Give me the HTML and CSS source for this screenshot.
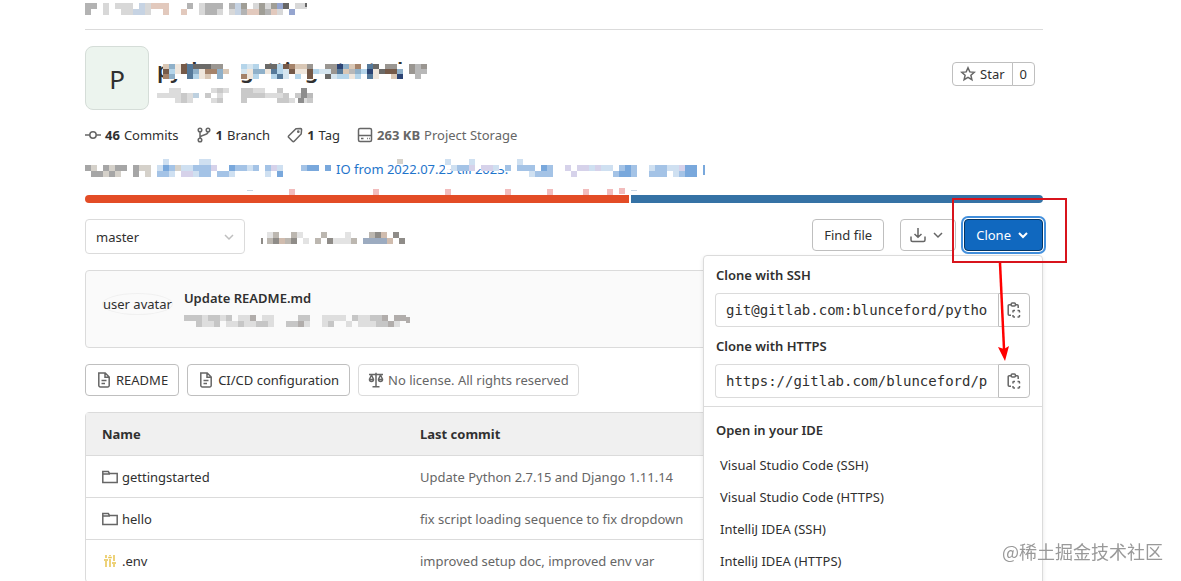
FILE: index.html
```html
<!DOCTYPE html>
<html lang="en">
<head>
    <meta charset="UTF-8">
    <meta name="viewport" content="width=device-width, initial-scale=1.0">
    <title>python-getting-started</title>
    <link rel="stylesheet" href="styles.css">
</head>
<body>
    <!-- Breadcrumb -->
    <header class="breadcrumb">
        <svg class="mosaic" width="222" height="12" viewBox="0 0 37 2" aria-hidden="true">
            <path stroke="#b3b3b3" d="M0 .5h2M17 .5h1M20 .5h3M24 .5h1M0 1.5h1M20 1.5h2M26 1.5h1M29 1.5h2"/>
            <path stroke="#d8d8d8" d="M3 .5h1M5 .5h3M10 .5h1M3 1.5h1M6 1.5h4M10 1.5h1M19 .5h1M19 1.5h1M22 1.5h1M24 1.5h2M28 .5h1M30 .5h1M32 1.5h1M35 .5h2"/>
            <path stroke="#c6d3e3" d="M9 .5h1M8 1.5h2M25 .5h1M25 1.5h1"/>
            <path stroke="#e2c9bd" d="M11 .5h3M13 1.5h1M16 1.5h1M27 1.5h2M31 1.5h1"/>
            <path stroke="#a09e96" d="M26 .5h1M29 .5h1M31 .5h1M29 1.5h1"/>
            <path stroke="#666" d="M33 .5h1M36.600 0.200h.4"/>
            <path stroke="#95a5cf" d="M32 .5h1M34 1.5h1"/>
        </svg>
    </header>

    <!-- Project title -->
    <section class="project">
        <div class="avatar">P</div>
        <div class="project-info">
            <h1>python-getting-started</h1>
            <svg class="mosaic title-mosaic" width="270" height="15" viewBox="0 0 45 3" preserveAspectRatio="none" aria-hidden="true">
                <rect x="1" width="40" height="3" fill="#fff"/>
                <path stroke="#d9c7b5" d="M1 .5h1M11 1.5h1M8 2.500h1M23 .5h2M32 .5h1M31 1.5h1M39 2.500h1"/>
                <path stroke="#8fb0c9" d="M2 .5h1M6 1.5h1M10 1.5h1M2 2.500h1M10 2.500h1M17 1.500h1M16 1.5h1M31 .5h1M33 1.5h1M40 1.5h1"/>
                <path stroke="#efe6dc" d="M3 .5h1M3 1.5h1M7 1.5h1M7 2.500h1M15 1.5h1M15 2.500h1M18 1.5h1M23 1.5h2M36 1.5h1M32 2.500h1M36 2.500h1"/>
                <path stroke="#755a49" d="M4 .5h1M1 1.5h1M4 1.5h1M21 .5h1M22 1.5h1M25 1.500h1M38 1.500h2M25 2.500h1"/>
                <path stroke="#a5836a" d="M8 1.5h2M22 .5h1M33 .5h1M1 2.500h1M14 2.500h1"/>
                <path stroke="#55799a" d="M5 .5h1M5 1.5h1M5 2.500h1M19 1.5h1M20 2.500h1M35 .5h1M30 1.500h1M35 2.500h1"/>
                <path stroke="#6b6a68" d="M6 .5h3M18 .5h2M28 2.500h1M36 .5h1M37 1.5h1"/>
                <path stroke="#9a9691" d="M9 .5h2M25 .5h1M28 .5h2M29 1.500h1M38 .5h2M42 .5h1M44 .5h1M42 1.5h1"/>
                <path stroke="#b5d5ea" d="M2 1.5h1M14 .5h1M16 .5h1M6 2.500h1M16 2.500h1M20 .5h1M20 1.5h1M19 2.500h1M26 1.500h1M23 2.500h1M30 2.500h2M33 2.500h1M34 1.500h1"/>
                <path stroke="#d5e5ef" d="M15 .5h1M14 1.5h1M21 1.5h1M21 2.500h1M27 1.5h1M29 2.500h1M28 1.5h1"/>
                <path stroke="#2c4474" d="M30 .5h1M35 1.5h1M40 2.500h1"/>
                <path stroke="#b8b8b8" d="M43 .5h1M43 1.500h2M43 2.500h1M32 1.500h1"/>
            </svg>
            <svg class="mosaic" width="270" height="15" viewBox="0 0 45 3" preserveAspectRatio="none" aria-hidden="true">
                <path stroke="#dcdcdc" d="M2 .5h2M9 .5h1M11 .5h1M16 .5h2M0 1.5h4M5 1.500h1M10 1.500h1M18 1.5h3M3 2.500h1M5 2.500h1M9 2.500h1M22 2.500h1M24 2.500h1"/>
                <path stroke="#c9c9c9" d="M10 .5h1M14 .5h2M20 .5h1M4 1.5h1M8 1.5h1M14 1.5h4M21 1.5h1M4 2.500h1M10 2.500h1M14 2.500h1M20 2.500h2M23 1.500h1M25 2.500h1"/>
                <path stroke="#bdd0df" d="M6 1.5h1"/>
                <path stroke="#8d8d8d" d="M24 .5h1M24 1.5h1M23.500 2.500h1"/>
                <path stroke="#bbb" d="M25 1.5h1"/>
            </svg>
        </div>
        <div class="star-group">
            <button type="button" class="btn btn-small">
                <svg class="icon" viewBox="0 0 16 16" aria-hidden="true"><path d="M8 1.8l1.8 4.1 4.5.4-3.4 3 1 4.4L8 11.4l-3.9 2.3 1-4.4-3.4-3 4.5-.4z"/></svg>
                Star
            </button>
            <a href="#" class="btn btn-small">0</a>
        </div>
    </section>

    <nav class="stats">
        <a href="#">
            <svg class="icon" viewBox="0 0 16 16" aria-hidden="true"><circle cx="8" cy="8" r="3.2"/><path d="M0 8h4.8M11.2 8H16"/></svg>
            <strong>46</strong> Commits
        </a>
        <a href="#">
            <svg class="icon" viewBox="0 0 16 16" aria-hidden="true"><circle cx="4" cy="3" r="1.8"/><circle cx="4" cy="13" r="1.8"/><circle cx="12" cy="3" r="1.8"/><path d="M4 5v6M12 5c0 4-8 2-8 6"/></svg>
            <strong>1</strong> Branch
        </a>
        <a href="#">
            <svg class="icon" viewBox="0 0 16 16" aria-hidden="true"><path d="M9 1.8l4.6-.4c.6 0 1 .4 1 1L14.2 7l-7 7.2c-.5.5-1.2.5-1.7 0L1.8 10.5c-.5-.5-.5-1.2 0-1.7z"/><circle cx="11.3" cy="4.7" r=".6"/></svg>
            <strong>1</strong> Tag
        </a>
        <span class="storage">
            <svg class="icon" viewBox="0 0 16 16" aria-hidden="true"><rect x="1.5" y="1.5" width="13" height="13" rx="1.5"/><path d="M1.5 8.5h13M4 11.5h2.5M10 11.5h.8M12 11.5h.8"/></svg>
            <strong>263 KB</strong> Project Storage
        </span>
    </nav>

    <div class="description">
        <a href="#">IO from 2022.07.25 till 2023.</a>
        <svg class="mosaic" width="624" height="36" viewBox="0 0 104 6" aria-hidden="true">
            <path stroke="#fff" d="M54 .5h20M60 1.100h14M71 1.500h3"/>
            <path stroke="#a6a6a6" d="M0 1.5h1M1 2.5h2M3 1.5h1M5 1.5h2M4 2.5h1M8 1.5h1M8 2.5h1"/>
            <path stroke="#d5d1ca" d="M1 1.5h1M4 1.5h1M3 2.5h1M5 2.500h1M9 1.5h2M10 2.5h1M15 1.500h1M52 .3h1"/>
            <path stroke="#cfe0f1" d="M12 1.5h1M13 .5h1M14 2.5h1M19 .5h2M16 1.5h2M18 2.5h1M24 2.5h1M26 1.5h2M30 2.5h1M32 1.5h1M60 .5h1M64 .5h1M72 .5h1M61 1.500h1M68 1.500h1M74 2.500h1M84 1.500h1M87 1.500h1M94 1.500h1M86 1.500h1M97 1.500h2M98 2.500h1"/>
            <path stroke="#a4c3e6" d="M14 1.500h1M18 1.5h3M12 2.500h2M19 2.5h2M23 2.5h1M25 1.5h2M22 2.500h1M28 1.500h1M30 1.5h1M36 1.5h1M62 1.5h2M70 1.5h1M72 1.5h3M75 2.5h3M77 1.500h1M89 1.5h3M88 2.5h1M91 2.500h1M94 2.500h3M95 1.5h2M99 2.500h1"/>
            <path stroke="#79a8dc" d="M13 1.5h1M24 1.5h1M32 2.5h1M37 1.5h2M40 1.5h1M76 1.5h1M89 2.500h2M90 1.5h1M100 1.500h2M100 2.5h2M103 1.5h.4M103 2.2h.4"/>
            <path stroke="#d6d2ea" d="M16 2.5h2M21 1.5h1M31 1.5h1M64 1.500h1M66 1.5h2M80 1.500h1M82 1.5h2M81 2.5h1M85 1.5h1M99 1.500h1"/>
            <path stroke="#f2bcbc" d="M34 5.5h1M48 5.5h1M60 5.5h1M70 5.5h1M77 5.5h1M83 5.5h1M87 5.5h1M89 5.300h1"/>
            <path stroke="#c9d6e4" stroke-width=".2" d="M27 5.300h1M91 5.300h1"/>
        </svg>
    </div>

    <!-- Language bar -->
    <div class="languages">
        <span class="lang-html" style="flex-grow: 568"></span>
        <span class="lang-python" style="flex-grow: 430"></span>
    </div>

    <section class="tree-controls">
        <label class="hidden-label" for="branch">Branch</label>
        <div class="branch-select">
            <select id="branch"><option>master</option></select>
            <svg class="icon" viewBox="0 0 16 16" aria-hidden="true"><path d="M4 6l4 4 4-4"/></svg>
        </div>
        <svg class="mosaic path-mosaic" width="144" height="12" viewBox="0 0 24 2" aria-hidden="true">
            <path stroke="#bcb7b0" d="M2 .5h1M5 .5h1M10 .5h1M18 .5h1M20 .5h1M1 1.5h2M4 1.5h1M9 1.5h1M15 1.5h1M21 1.5h1"/>
            <path stroke="#8f8c88" d="M0 1.500h.3M5 1.5h1M11 1.5h1M23 1.5h1M19 .5h1M22 .5h1M2 1.5h1"/>
            <path stroke="#e3e3e3" d="M1 .5h1M3 1.500h1M6 .5h1M7 1.5h1M13 1.5h1M14 .5h1M14 1.500h1M12 1.5h1"/>
            <path stroke="#d0bcae" d="M20 .5h1M21 1.5h1M3 1.500h1"/>
            <path stroke="#9cabc0" d="M17 1.5h3M20 1.5h1"/>
        </svg>
        <div class="tree-actions">
            <a href="#" class="btn">Find file</a>
            <button type="button" class="btn btn-download" aria-label="Download">
                <svg class="icon" viewBox="0 0 16 16" aria-hidden="true"><path d="M8 1v9M4.5 7L8 10.3 11.5 7M1 9.5V13a1.5 1.5 0 0 0 1.5 1.5h11A1.5 1.5 0 0 0 15 13V9.5"/></svg>
                <svg class="icon" viewBox="0 0 16 16" aria-hidden="true"><path d="M4 6l4 4 4-4"/></svg>
            </button>
            <button type="button" class="btn btn-clone">
                Clone
                <svg class="icon" viewBox="0 0 16 16" aria-hidden="true"><path d="M4 6l4 4 4-4"/></svg>
            </button>
        </div>

        <!-- Clone dropdown -->
        <div class="clone-menu">
            <div class="clone-urls">
                <label for="ssh">Clone with SSH</label>
                <div class="url-group">
                    <input type="text" id="ssh" value="git@gitlab.com:blunceford/pytho" readonly>
                    <button type="button" class="btn btn-copy" aria-label="Copy SSH URL">
                        <svg class="icon" viewBox="0 0 16 16" aria-hidden="true"><path d="M5 13.2H3.2a1 1 0 0 1-1-1V3.8a1 1 0 0 1 1-1H5M9.500 2.800h1.700a1 1 0 0 1 1 1V6"/><rect x="5.200" y="1" width="4.200" height="3" rx="1"/><path d="M7 10.500V9.200a.7.7 0 0 1 .7-.7H9M11.500 8.500h1.300a.7.7 0 0 1 .7.7v1.300M13.500 13v1.300a.7.7 0 0 1-.7.7h-1.300M9 15H7.700a.7.7 0 0 1-.7-.7V13"/></svg>
                    </button>
                </div>
                <label for="https">Clone with HTTPS</label>
                <div class="url-group">
                    <input type="text" id="https" value="https://gitlab.com/blunceford/p" readonly>
                    <button type="button" class="btn btn-copy" aria-label="Copy HTTPS URL">
                        <svg class="icon" viewBox="0 0 16 16" aria-hidden="true"><path d="M5 13.2H3.2a1 1 0 0 1-1-1V3.8a1 1 0 0 1 1-1H5M9.500 2.800h1.700a1 1 0 0 1 1 1V6"/><rect x="5.200" y="1" width="4.200" height="3" rx="1"/><path d="M7 10.500V9.200a.7.7 0 0 1 .7-.7H9M11.500 8.500h1.300a.7.7 0 0 1 .7.7v1.300M13.500 13v1.300a.7.7 0 0 1-.7.7h-1.300M9 15H7.700a.7.7 0 0 1-.7-.7V13"/></svg>
                    </button>
                </div>
            </div>
            <h2>Open in your IDE</h2>
            <ul>
                <li><a href="#">Visual Studio Code (SSH)</a></li>
                <li><a href="#">Visual Studio Code (HTTPS)</a></li>
                <li><a href="#">IntelliJ IDEA (SSH)</a></li>
                <li><a href="#">IntelliJ IDEA (HTTPS)</a></li>
            </ul>
        </div>

        <!-- Highlight around the clone button -->
        <div class="highlight"></div>
        <svg class="arrow" width="12" height="98" viewBox="0 0 12 98" aria-hidden="true">
            <path d="M3 0L7 86" stroke="#f00" stroke-width="2.5"/>
            <path d="M1 84l6 2 5-3-4 15z" fill="#f00"/>
        </svg>
    </section>

    <!-- Last commit -->
    <section class="last-commit">
        <span class="user-avatar">user avatar</span>
        <div>
            <a href="#">Update README.md</a>
            <svg class="mosaic" width="228" height="12" viewBox="0 0 38 2" aria-hidden="true">
                <path stroke="#c6c6c6" d="M0 .5h3M4 .5h2M7 .5h1M19 .5h2M28 .5h1M31 .5h2M2 1.5h1M5 1.5h1M9 1.5h1M12 1.5h2M17 1.5h3M24 1.5h1M32 1.5h2"/>
                <path stroke="#dedede" d="M3 .500h1M6 .5h1M9 .5h2M13 .5h2M23 .5h4M29 .5h2M3 1.5h2M7 1.5h2M10 1.5h2M14 1.5h1M20 1.5h1M23 1.5h1M27 1.5h1M29 1.5h3M35 1.5h1"/>
                <path stroke="#b1adab" d="M11 .5h1M33 .5h1M35 .5h2M19 1.5h1M34 1.5h1M37 .8h.6"/>
            </svg>
        </div>
    </section>

    <div class="file-buttons">
        <a href="#" class="btn">
            <svg class="icon" viewBox="0 0 16 16" aria-hidden="true"><path d="M2.8 1h6.4l4 4v8.5A1.5 1.5 0 0 1 11.7 15H4.3a1.5 1.5 0 0 1-1.5-1.5zM9 1v4.2h4.2M5.5 8.5h5M5.5 11.5h3.5"/></svg>
            README
        </a>
        <a href="#" class="btn">
            <svg class="icon" viewBox="0 0 16 16" aria-hidden="true"><path d="M2.8 1h6.4l4 4v8.5A1.5 1.5 0 0 1 11.7 15H4.3a1.5 1.5 0 0 1-1.5-1.5zM9 1v4.2h4.2M5.5 8.5h5M5.5 11.5h3.5"/></svg>
            CI/CD configuration
        </a>
        <a href="#" class="btn btn-muted">
            <svg class="icon" viewBox="0 0 16 16" aria-hidden="true"><path d="M1 2.5h14M8 .8v14M4.5 14.7h7M3.5 3L1.6 7M3.5 3l1.9 4M12.5 3l-1.9 4M12.5 3l1.9 4M1.5 7.5a2 2 0 0 0 4 0zM10.5 7.5a2 2 0 0 0 4 0z"/></svg>
            No license. All rights reserved
        </a>
    </div>

    <!-- File list -->
    <table class="files">
        <thead>
            <tr><th>Name</th><th>Last commit</th></tr>
        </thead>
        <tbody>
            <tr>
                <td><a href="#"><svg class="icon" viewBox="0 0 16 16" aria-hidden="true"><path d="M.8 13.5v-11h5.5l1.2 2h7.7v9zM.8 5H8"/></svg>gettingstarted</a></td>
                <td>Update Python 2.7.15 and Django 1.11.14</td>
            </tr>
            <tr>
                <td><a href="#"><svg class="icon" viewBox="0 0 16 16" aria-hidden="true"><path d="M.8 13.5v-11h5.5l1.2 2h7.7v9zM.8 5H8"/></svg>hello</a></td>
                <td>fix script loading sequence to fix dropdown</td>
            </tr>
            <tr>
                <td><a href="#"><svg class="icon icon-env" viewBox="0 0 16 16" aria-hidden="true"><path d="M4 2v3M4 8v6M8 2v1M8 6v8M12 2v6M12 11v3M2 7h4M6.2 4.5h3.6M10 10h4"/></svg>.env</a></td>
                <td>improved setup doc, improved env var</td>
            </tr>
        </tbody>
    </table>

    <div class="watermark">@稀土掘金技术社区</div>
</body>
</html>
```
FILE: styles.css
```css
* {
    box-sizing: border-box;
}

body {
    font-family: 'Noto Sans', 'Open Sans', sans-serif;
    font-size: 13px;
    line-height: 20px;
    color: #303030;
    background: #fff;
    margin: 0;
    padding: 0 138px 0 85px;
    height: 100vh;
    overflow: hidden;
}

a {
    color: inherit;
    text-decoration: none;
}

.icon {
    width: 16px;
    height: 16px;
    flex: none;
    fill: none;
    stroke: #666;
    stroke-width: 1.5;
}

/* Blocked-out text */
.mosaic {
    display: block;
    shape-rendering: crispEdges;
}

.breadcrumb {
    height: 30px;
    padding-top: 3px;
    border-bottom: 1px solid #dbdbdb;
}

/* Project */
.project {
    display: flex;
    align-items: flex-start;
    gap: 8px;
    padding: 16px 8px 0 0;
}

.avatar {
    width: 64px;
    height: 64px;
    border: 1px solid #d5ddd8;
    border-radius: 8px;
    background: #ecf4ee;
    font-size: 26px;
    line-height: 64px;
    text-align: center;
}

.project-info {
    flex: 1;
    position: relative;
    height: 64px;
    padding-top: 8px;
}

.project-info h1 {
    margin: 0 0 4px;
    font-size: 22px;
    line-height: 30px;
    font-weight: 600;
}

.title-mosaic {
    position: absolute;
    top: 18px;
    left: 0;
}

.btn {
    display: inline-flex;
    align-items: center;
    gap: 4px;
    height: 32px;
    padding: 0 11px;
    border: 1px solid #bfbfbf;
    border-radius: 4px;
    background: #fff;
    color: #303030;
    font: inherit;
    white-space: nowrap;
}

.btn-small {
    height: 24px;
    padding: 0 7px;
}

.star-group {
    display: flex;
    margin-top: 16px;
}

.star-group button {
    border-radius: 4px 0 0 4px;
}

.star-group a {
    margin-left: -1px;
    border-radius: 0 4px 4px 0;
}

/* Stats */
.stats {
    display: flex;
    gap: 17px;
    padding-top: 15px;
}

.stats a,
.stats span {
    display: flex;
    align-items: center;
    gap: 4px;
}

.stats .storage {
    color: #666;
}

.description {
    position: relative;
    margin-top: 14px;
    padding-left: 251px;
    color: #1f75cb;
}

.description .mosaic {
    position: absolute;
    top: 0;
    left: 0;
}

.languages {
    display: flex;
    gap: 2px;
    height: 8px;
    margin-top: 16px;
    border-radius: 4px;
    overflow: hidden;
}

.lang-html {
    background: #e34c26;
}

.lang-python {
    background: #3572a5;
}

/* Branch select and buttons */
.tree-controls {
    position: relative;
    display: flex;
    margin-top: 16px;
}

.hidden-label {
    display: none;
}

.branch-select {
    position: relative;
    width: 160px;
}

.branch-select select {
    appearance: none;
    width: 100%;
    height: 35px;
    padding: 0 10px;
    border: 1px solid #dbdbdb;
    border-radius: 4px;
    background: #fff;
    color: #303030;
    font: inherit;
}

.branch-select .icon {
    position: absolute;
    top: 10px;
    right: 8px;
    stroke: #bfbfbf;
}

.path-mosaic {
    margin: 13px 0 0 16px;
}

.tree-actions {
    display: flex;
    gap: 8px;
    margin-left: auto;
}

.btn-download {
    margin-left: 8px;
    padding: 0 9px;
}

.btn-clone {
    border-color: #033464;
    background: #1068bf;
    color: #fff;
    box-shadow: 0 0 0 1px #fff, 0 0 0 3px #428fdc;
}

.btn-clone .icon {
    stroke: #fff;
    stroke-width: 2;
}

/* Clone dropdown */
.clone-menu {
    position: absolute;
    top: 36px;
    right: 0;
    width: 340px;
    height: 400px;
    border: 1px solid #dbdbdb;
    border-radius: 4px;
    background: #fff;
    box-shadow: 0 2px 4px rgba(0, 0, 0, 0.1);
}

.clone-urls {
    padding: 9px 12px 8px 11px;
    border-bottom: 1px solid #dbdbdb;
}

.clone-urls label,
.clone-menu h2 {
    display: block;
    margin: 0;
    padding-left: 1px;
    font-size: 13px;
    font-weight: 600;
}

.url-group {
    display: flex;
    margin: 8px 0 9px;
}

.url-group:last-child {
    margin-bottom: 0;
}

.url-group input {
    flex: 1;
    min-width: 0;
    height: 34px;
    padding: 0 10px;
    border: 1px solid #dbdbdb;
    border-right: 0;
    border-radius: 4px 0 0 4px;
    font-family: 'DejaVu Sans Mono', monospace;
    font-size: 14px;
    color: #303030;
}

.btn-copy {
    width: 32px;
    height: 34px;
    padding: 0 7px;
    border-radius: 0 4px 4px 0;
}

.clone-menu h2 {
    padding: 13px 12px 9px;
}

.clone-menu ul {
    list-style: none;
    margin: 0;
    padding: 0;
}

.clone-menu li {
    padding: 6px 16px;
}

.highlight {
    position: absolute;
    top: -21px;
    right: -24px;
    width: 115px;
    height: 65px;
    border: 2px solid #d8141c;
}

.arrow {
    position: absolute;
    top: 44px;
    right: 34px;
}

/* Last commit */
.last-commit {
    display: flex;
    gap: 12px;
    height: 78px;
    margin-top: 16px;
    padding: 17px;
    border: 1px solid #dbdbdb;
    border-radius: 4px;
    background: #fafafa;
}

.user-avatar {
    align-self: flex-start;
    margin-top: 6px;
    border-radius: 50%;
    box-shadow: 0 0 0 1px #f0f0f0;
}

.last-commit a {
    font-weight: 600;
}

.last-commit .mosaic {
    margin-top: 7px;
}

.file-buttons {
    display: flex;
    gap: 8px;
    margin: 16px 0;
}

.file-buttons .btn {
    padding: 0 10px;
}

.file-buttons .btn-muted {
    padding: 0 9px;
    border-color: #dbdbdb;
    color: #666;
}

/* File list */
.files {
    width: 100%;
    border: 1px solid #dbdbdb;
    border-collapse: separate;
    border-spacing: 0;
    border-radius: 4px;
}

.files th,
.files td {
    height: 42px;
    padding: 0 16px;
    border-bottom: 1px solid #dbdbdb;
    text-align: left;
    color: #666;
}

.files th {
    height: 43px;
    background: #f0f0f0;
    color: #303030;
}

.files th:first-child {
    width: 318px;
}

.files td a {
    display: flex;
    align-items: center;
    gap: 4px;
    color: #303030;
}

.files .icon-env {
    stroke: #e8c34f;
}

.watermark {
    position: fixed;
    right: 18px;
    bottom: 17px;
    font-family: 'Noto Sans CJK SC', sans-serif;
    font-size: 18px;
    line-height: 26px;
    color: #999;
}
```
